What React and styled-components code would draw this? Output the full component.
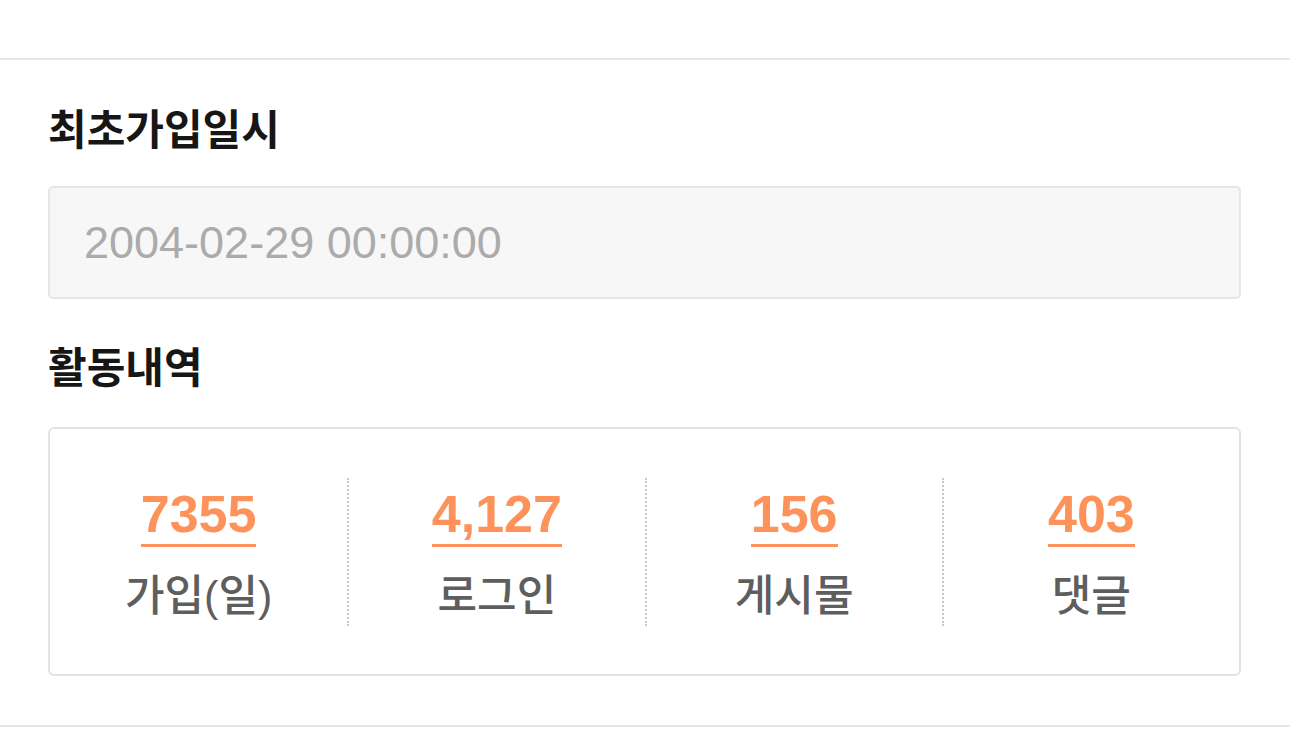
import React from "react";
import styled, { createGlobalStyle } from "styled-components";

const GlobalStyle = createGlobalStyle`
  html, body {
    margin: 0;
    padding: 0;
    background: #ffffff;
  }
  body {
    font-family: "Liberation Sans", "Noto Sans CJK KR", sans-serif;
    -webkit-font-smoothing: antialiased;
  }
`;

const Page = styled.div`
  width: 1290px;
  min-height: 749px;
  background: #ffffff;
`;

const TopBar = styled.div`
  height: 58px;
  border-bottom: 2px solid #e6e6e6;
`;

const Section = styled.section`
  padding: 0 49px 49px 48px;
  border-bottom: 2px solid #e6e6e6;
`;

const Title = styled.h2`
  margin: 0;
  padding-top: ${(p) => p.$top}px;
  height: 48px;
  line-height: 48px;
  font-size: 42px;
  font-weight: 700;
  color: #161616;
`;

const ReadOnlyField = styled.div`
  box-sizing: border-box;
  margin-top: 31px;
  height: 113px;
  display: flex;
  align-items: center;
  padding: 0 0 0 34px;
  background: #f7f7f7;
  border: 2px solid #e6e6e6;
  border-radius: 5px;
  font-size: 45px;
  color: #ababab;
`;

const StatsCard = styled.div`
  box-sizing: border-box;
  margin-top: 34px;
  height: 249px;
  padding: 49px 0 48px;
  display: grid;
  grid-template-columns: repeat(4, 1fr);
  border: 2px solid #e3e3e3;
  border-radius: 6px;
`;

const StatCell = styled.div`
  display: flex;
  flex-direction: column;
  align-items: center;
  padding-top: 10px;
  border-left: ${(p) => (p.$first ? "none" : "2px dotted #c9c9c9")};
`;

const Count = styled.span`
  display: inline-block;
  font-size: 52px;
  line-height: 52px;
  font-weight: 700;
  color: #fd935b;
  padding-bottom: 4px;
  border-bottom: 3px solid #fd935b;
`;

const Label = styled.span`
  margin-top: 25px;
  font-size: 43px;
  line-height: 48px;
  font-weight: 500;
  color: #5e5e5e;
`;

const stats = [
  { count: "7355", label: "가입(일)" },
  { count: "4,127", label: "로그인" },
  { count: "156", label: "게시물" },
  { count: "403", label: "댓글" },
];

export default function App() {
  return (
    <Page>
      <GlobalStyle />
      <TopBar />
      <Section>
        <Title $top={47}>최초가입일시</Title>
        <ReadOnlyField>2004-02-29 00:00:00</ReadOnlyField>
        <Title $top={46}>활동내역</Title>
        <StatsCard>
          {stats.map((s, i) => (
            <StatCell key={s.label} $first={i === 0}>
              <Count>{s.count}</Count>
              <Label>{s.label}</Label>
            </StatCell>
          ))}
        </StatsCard>
      </Section>
    </Page>
  );
}
